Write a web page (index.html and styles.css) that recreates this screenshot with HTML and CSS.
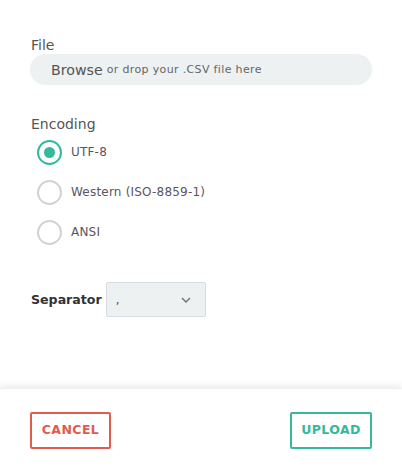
FILE: index.html
```html
<!DOCTYPE html>
<html>
<head>
<meta charset="utf-8">
<link rel="stylesheet" href="styles.css">
</head>
<body>
<div class="page">
  <div class="content">
    <div class="label">File</div>
    <div class="dropzone"><span class="browse">Browse</span> <span class="hint">or drop your .CSV file here</span></div>

    <div class="label enc">Encoding</div>
    <div class="radios">
      <div class="radio-row"><span class="radio checked"></span><span class="rtext">UTF-8</span></div>
      <div class="radio-row"><span class="radio"></span><span class="rtext">Western (ISO-8859-1)</span></div>
      <div class="radio-row"><span class="radio"></span><span class="rtext">ANSI</span></div>
    </div>

    <div class="sep-row">
      <span class="sep-label">Separator</span>
      <div class="select"><span class="sel-val">,</span>
        <svg class="chev" width="10" height="6" viewBox="0 0 10 6"><path d="M1 1 L5 5 L9 1" fill="none" stroke="#6b7378" stroke-width="1.4"/></svg>
      </div>
    </div>
  </div>
  <div class="footer">
    <button class="btn cancel">CANCEL</button>
    <button class="btn upload">UPLOAD</button>
  </div>
</div>
</body>
</html>
```
FILE: styles.css
```css
* { box-sizing: border-box; }
html, body { margin: 0; padding: 0; background: #fff; }
body { font-family: "DejaVu Sans", "Noto Sans", sans-serif; color: #555; }
.page { height: 467px; display: flex; flex-direction: column; }
.content { padding: 37px 30px 0 30px; flex: 1; }
.label { font-size: 14px; line-height: 17px; color: #555; padding-left: 1px; }
.dropzone {
  height: 31px; border-radius: 16px; background: #eef1f2;
  display: flex; align-items: center; padding-left: 21px; white-space: nowrap;
}
.browse { font-size: 14.2px; color: #555; margin-right: 4px; }
.hint { font-size: 11px; color: #666; letter-spacing: 0.35px; }
.enc { margin-top: 31px; }
.radios { display: flex; flex-direction: column; padding-left: 7px; margin-top: -1px; }
.radio-row { height: 40px; display: flex; align-items: center; }
.radio {
  width: 25px; height: 25px; border-radius: 50%; border: 2px solid #cfd3d6;
  display: flex; align-items: center; justify-content: center; margin-right: 9px;
}
.radio.checked { border-color: #35b89d; }
.radio.checked::after { content: ""; width: 11px; height: 11px; border-radius: 50%; background: #35b89d; }
.rtext { font-size: 12px; color: #5a5560; letter-spacing: 0.2px; }
.sep-row { margin-top: 30px; display: flex; align-items: center; }
.sep-label { font-size: 12.6px; font-weight: bold; color: #333; padding-left: 1px; margin-right: 4px; }
.select {
  width: 100px; height: 35px; background: #eef1f2; border: 1px solid #d9dde0; border-radius: 2px;
  display: flex; align-items: center; justify-content: space-between; padding: 0 14px 0 9px;
}
.sel-val { font-size: 12px; color: #555; }
.footer {
  height: 79px; box-shadow: 0 -3px 6px rgba(0,0,0,0.07);
  display: flex; justify-content: space-between; align-items: flex-start;
  padding: 23px 30px 0 30px; border-top: 1px solid #f0f0f0;
}
.btn {
  height: 37px; background: #fff; border-radius: 2px; border: 2px solid;
  font-family: "DejaVu Sans", sans-serif; font-weight: bold; font-size: 12.5px; letter-spacing: 0.4px;
  padding: 0 0 2px 0; cursor: pointer;
}
.cancel { width: 81px; border-color: #e05c50; color: #e05c50; }
.upload { width: 82px; border-color: #35b89d; color: #35b89d; }
```
